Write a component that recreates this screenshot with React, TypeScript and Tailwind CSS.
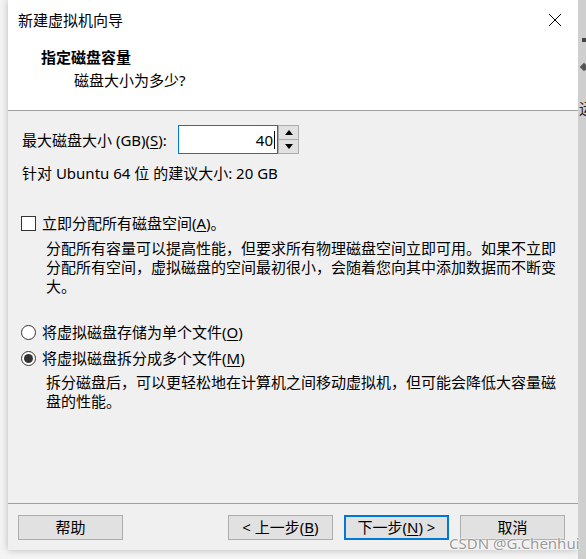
import React from 'react'

const font = "font-['Noto_Sans','Noto_Sans_CJK_SC',sans-serif]"

function Key({ k }: { k: string }) {
  return <span className="underline underline-offset-2">{k}</span>
}

function Btn({ children, primary }: { children: React.ReactNode; primary?: boolean }) {
  return (
    <button
      className={
        'w-[105px] h-[25px] bg-[#e1e1e1] text-[15px] leading-none text-black flex items-center justify-center ' +
        (primary ? 'border-2 border-[#0078d7]' : 'border border-[#adadad]')
      }
    >
      {children}
    </button>
  )
}

function Radio({ checked }: { checked?: boolean }) {
  return (
    <span className="w-[15px] h-[15px] rounded-full border border-[#333] bg-white flex items-center justify-center shrink-0">
      {checked && <span className="w-[9px] h-[9px] rounded-full bg-[#333]" />}
    </span>
  )
}

export default function App() {
  return (
    <div className={`w-[586px] h-[559px] relative overflow-hidden bg-[#f4f4f4] flex ${font} text-black`}>
      <div className="w-[8px] shrink-0" />

      <div className="w-[570px] h-[550px] flex flex-col bg-[#f0f0f0] shadow-[0_0_7px_rgba(0,0,0,0.25)]">
        {/* header */}
        <div className="h-[111px] bg-white border-b border-[#a0a0a0] pt-[10px]">
          <div className="h-[20px] flex items-center justify-between pl-[10px] pr-[16px]">
            <span className="text-[15px] leading-[20px]">新建虚拟机向导</span>
            <svg width="14" height="14" viewBox="0 0 14 14">
              <path d="M1 1 L13 13 M13 1 L1 13" stroke="#000" strokeWidth="1" />
            </svg>
          </div>
          <div className="mt-[17px] pl-[33px] text-[15px] leading-[20px] font-bold">指定磁盘容量</div>
          <div className="mt-[3px] pl-[66px] text-[15px] leading-[20px]">磁盘大小为多少?</div>
        </div>

        {/* body */}
        <div className="h-[392px] text-[15px] leading-[20px] pl-[14px]">
          <div className="mt-[14px] flex items-center h-[29px]">
            <span className="w-[156px]">
              最大磁盘大小 (GB)(<Key k="S" />):
            </span>
            <div className="w-[100px] h-[29px] bg-white border border-[#0078d7] flex items-center justify-end pr-[2px]">
              <span>40</span>
              <span className="w-px h-[18px] bg-black ml-px" />
            </div>
            <div className="w-[21px] h-[29px] flex flex-col border border-[#adadad] bg-[#adadad] gap-px">
              <div className="flex-1 bg-[#e1e1e1] flex items-center justify-center">
                <svg width="8" height="5" viewBox="0 0 8 5"><path d="M4 0 L8 5 L0 5 Z" fill="#000" /></svg>
              </div>
              <div className="flex-1 bg-[#e1e1e1] flex items-center justify-center">
                <svg width="8" height="5" viewBox="0 0 8 5"><path d="M0 0 L8 0 L4 5 Z" fill="#000" /></svg>
              </div>
            </div>
          </div>

          <div className="mt-[9px]">针对 Ubuntu 64 位 的建议大小: 20 GB</div>

          <div className="mt-[30px] flex items-center gap-[6px] -ml-px">
            <span className="w-[15px] h-[15px] border border-[#333] bg-white shrink-0" />
            <span>
              立即分配所有磁盘空间(<Key k="A" />)。
            </span>
          </div>

          <div className="mt-[6px] pl-[24px] leading-[19px] whitespace-nowrap">
            <div>分配所有容量可以提高性能，但要求所有物理磁盘空间立即可用。如果不立即</div>
            <div>分配所有空间，虚拟磁盘的空间最初很小，会随着您向其中添加数据而不断变</div>
            <div>大。</div>
          </div>

          <div className="mt-[26px] flex items-center gap-[6px] -ml-px">
            <Radio />
            <span>
              将虚拟磁盘存储为单个文件(<Key k="O" />)
            </span>
          </div>
          <div className="mt-[6px] flex items-center gap-[6px] -ml-px">
            <Radio checked />
            <span>
              将虚拟磁盘拆分成多个文件(<Key k="M" />)
            </span>
          </div>
          <div className="mt-[5px] pl-[24px] leading-[19px] whitespace-nowrap">
            <div>拆分磁盘后，可以更轻松地在计算机之间移动虚拟机，但可能会降低大容量磁</div>
            <div>盘的性能。</div>
          </div>
        </div>

        {/* footer */}
        <div className="border-t border-[#a0a0a0] flex-1 pt-[11px] pl-[10px] pr-[13px] flex items-start">
          <Btn>帮助</Btn>
          <div className="flex-1" />
          <div className="flex gap-[11px]">
            <Btn>
              &lt; 上一步(<Key k="B" />)
            </Btn>
            <Btn primary>
              下一步(<Key k="N" />) &gt;
            </Btn>
            <Btn>取消</Btn>
          </div>
        </div>
      </div>

      <div className="w-[8px] shrink-0 bg-[#cfcfcf] relative overflow-hidden">
        <span className="absolute left-[4px] top-[38px] w-[4px] h-[4px] bg-[#444]" />
        <span className="absolute left-[3px] top-[64px] w-[6px] h-[6px] bg-[#555] rotate-45" />
        <span className="absolute left-[1px] top-[98px] text-[15px] leading-[20px] text-[#222]">运</span>
      </div>

      <span className="absolute left-[449px] top-[533px] text-[15px] leading-[20px] text-[#9a9a9a] [text-shadow:0_0_2px_#fff,0_0_2px_#fff]">
        CSDN @G.Chenhui
      </span>
    </div>
  )
}
